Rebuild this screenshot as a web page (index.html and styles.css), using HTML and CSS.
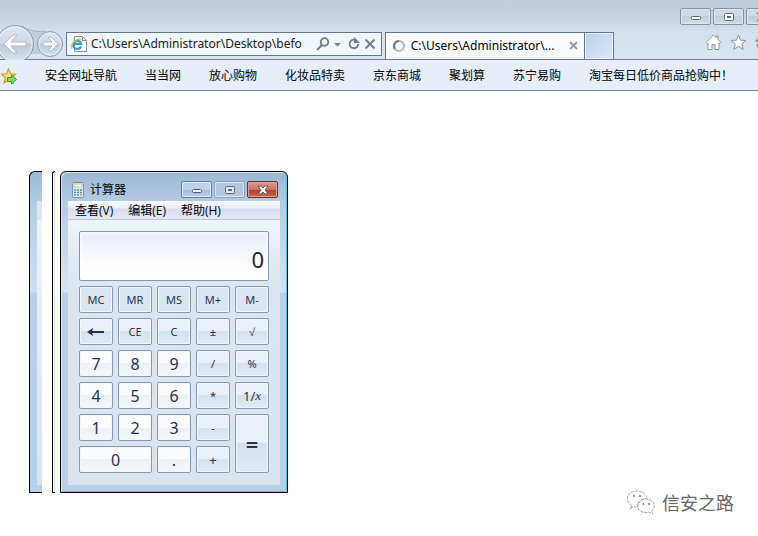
FILE: index.html
```html
<!DOCTYPE html>
<html lang="zh-CN">
<head>
<meta charset="utf-8">
<title>计算器</title>
<link rel="stylesheet" href="styles.css">
</head>
<body>
<header class="browser">
  <div class="caption">
    <button class="win-btn" aria-label="最小化"><svg width="12" height="10" viewBox="0 0 12 10"><rect x="1.5" y="4.500" width="9" height="3" rx="1" fill="#fff" stroke="#606974"/></svg></button>
    <button class="win-btn" aria-label="最大化"><svg width="12" height="10" viewBox="0 0 12 10"><rect x="1.500" y="1.500" width="9" height="7" rx="1" fill="#fff" stroke="#606974"/><rect x="4.500" y="4.500" width="3" height="1" fill="none" stroke="#606974"/></svg></button>
    <button class="win-btn win-btn-close" aria-label="关闭"><svg width="12" height="10" viewBox="0 0 12 10"><path d="M1 1h3l2 2 2-2h3L8 5l3 4H8L6 7 4 9H1l3-4z" fill="#fff" stroke="#606974"/></svg></button>
  </div>
  <div class="nav-row">
    <div class="history">
      <svg width="66" height="36" viewBox="0 0 66 36" aria-hidden="true">
        <defs>
          <linearGradient id="orb" x1="0" y1="0" x2="0" y2="1"><stop offset="0" stop-color="#dfe6ee"/><stop offset=".48" stop-color="#cfd8e2"/><stop offset=".5" stop-color="#bcc7d3"/><stop offset="1" stop-color="#dbe5ef"/></linearGradient>
        </defs>
        <path d="M22 2Q31 9 46 7L40 30H28z" fill="#c3ceda"/>
        <path d="M22 2Q31 9 46 7" fill="none" stroke="#a5b1be"/>
        <circle cx="15" cy="20" r="18.500" fill="url(#orb)" stroke="#8f9baa"/>
        <circle cx="15" cy="20" r="17" fill="none" stroke="#e9eff5"/>
        <path d="M4 20 13 11h4l-6 7h15v4H11l6 7h-4z" fill="#f8fafc" stroke="#a6b1bf" stroke-width=".8"/>
        <circle cx="50" cy="20" r="12.500" fill="url(#orb)" stroke="#8f9baa"/>
        <circle cx="50" cy="20" r="11" fill="none" stroke="#e9eff5"/>
        <path d="M58 20 51 13h-3l4 5h-9v4h9l-4 5h3z" fill="#f8fafc" stroke="#a6b1bf" stroke-width=".8"/>
      </svg>
    </div>
    <div class="address">
      <svg width="16" height="16" viewBox="0 0 16 16" aria-hidden="true"><path d="M3.500.5h8l4 4v11h-12z" fill="#fff" stroke="#8b8f94"/><path d="M11.500.5v4h4" fill="none" stroke="#8b8f94"/><path d="M10 10.500A4 4 0 1 1 10.200 8H3" fill="none" stroke="#2e9be0" stroke-width="2.200"/><path d="M.8 12.500C-.8 8 5 2.500 10.500 3" fill="none" stroke="#e3b52b" stroke-width="1.300"/></svg>
      <input class="url" type="text" aria-label="地址" value="C:\Users\Administrator\Desktop\befo">
      <button class="icon-btn" aria-label="搜索"><svg width="14" height="14" viewBox="0 0 14 14"><circle cx="8.500" cy="5" r="3.800" fill="none" stroke="#747c87" stroke-width="1.800"/><path d="M6 8 1 13" stroke="#747c87" stroke-width="2.200"/></svg></button>
      <button class="icon-btn" aria-label="展开"><svg width="8" height="14" viewBox="0 0 8 14"><path d="M0 6h7L3.500 9.500z" fill="#747c87"/></svg></button>
      <button class="icon-btn refresh" aria-label="刷新"><svg width="12" height="14" viewBox="0 0 12 14"><path d="M8 3.200A4.300 4.300 0 1 0 10.200 7" fill="none" stroke="#747c87" stroke-width="1.800"/><path d="M6 0v6h6z" fill="#747c87"/></svg></button>
      <button class="icon-btn" aria-label="停止"><svg width="12" height="14" viewBox="0 0 12 14"><path d="M1.500 2.500l9 9M10.500 2.500l-9 9" stroke="#747c87" stroke-width="2"/></svg></button>
    </div>
    <div class="tab">
      <svg width="14" height="14" viewBox="0 0 14 14" aria-hidden="true"><circle cx="7" cy="7" r="5" fill="none" stroke="#b4b6b9" stroke-width="2.200"/><path d="M7 2A5 5 0 0 0 3 10" fill="none" stroke="#777b80" stroke-width="2.200"/></svg>
      <span class="tab-title">C:\Users\Administrator\...</span>
      <button class="icon-btn" aria-label="关闭标签"><svg width="10" height="10" viewBox="0 0 10 10"><path d="M1 1l7 7M8 1 1 8" stroke="#9b9b9b" stroke-width="2"/></svg></button>
    </div>
    <button class="new-tab" aria-label="新建标签"></button>
    <div class="tools">
      <button class="icon-btn" aria-label="主页"><svg width="17" height="17" viewBox="0 0 17 17"><path d="M1 8.500 8.500 1l2.500 2.500V2h2v3.500l3 3-1 1-1-.5v6.500h-4v-5H7v5H3V9l-1 .5z" fill="#fff" stroke="#8d949c"/></svg></button>
      <button class="icon-btn" aria-label="收藏夹"><svg width="17" height="17" viewBox="0 0 17 17"><path d="M8.500 1l2 5.200 5.500.3-4.300 3.500 1.500 5.500-4.700-3.200-4.700 3.200L5.300 10 1 6.500l5.500-.3z" fill="#fff" stroke="#8d949c"/></svg></button>
      <button class="icon-btn" aria-label="工具"><svg width="17" height="17" viewBox="0 0 17 17"><circle cx="8.500" cy="8.500" r="6.500" fill="none" stroke="#8d949c" stroke-width="3" stroke-dasharray="2.600 2.500"/><circle cx="8.500" cy="8.500" r="4.500" fill="none" stroke="#8d949c" stroke-width="3"/><circle cx="8.500" cy="8.500" r="4.500" fill="none" stroke="#fff"/></svg></button>
    </div>
  </div>
  <nav class="favorites">
    <button class="icon-btn fav-add" aria-label="添加到收藏夹栏"><svg width="17" height="17" viewBox="0 0 17 17"><path d="M8.500 1l2 5 5 .3-4 3.500 1.500 5.200-4.500-3L4 15l1.500-5.200L1.500 6.300l5-.3z" fill="#fbe28a" stroke="#dc9b25" stroke-width="1.300"/><path d="M7.500 9.500h4v-2.500l5 4.500-5 4.500v-2.500h-4z" fill="#7ddb5c" stroke="#2f9a35"/></svg></button>
    <a href="#">安全网址导航</a>
    <a href="#">当当网</a>
    <a href="#">放心购物</a>
    <a href="#">化妆品特卖</a>
    <a href="#">京东商城</a>
    <a href="#">聚划算</a>
    <a href="#">苏宁易购</a>
    <a href="#">淘宝每日低价商品抢购中！</a>
  </nav>
</header>
<main class="page">
  <div class="windows">
    <div class="trail trail-wide"><div class="trail-body"></div></div>
    <div class="trail trail-thin"></div>
    <section class="calc" aria-label="计算器">
      <div class="calc-title">
        <svg width="12" height="16" viewBox="0 0 12 16" aria-hidden="true"><rect x=".5" y=".5" width="11" height="15" rx="1" fill="#d7eaf7" stroke="#6497bd"/><path d="M2 2h8v3H2z" fill="#fff" stroke="#e2bd67"/><path d="M2 8h2M5 8h2M8 8h2M2 10.500h2M5 10.500h2M8 10.500h2M2 13h2M5 13h2" stroke="#488ec0" stroke-width="1.500"/><path d="M8 13h2" stroke="#d8932d" stroke-width="1.500"/></svg>
        <h1>计算器</h1>
        <button class="win-btn" aria-label="最小化"><svg width="12" height="10" viewBox="0 0 12 10"><rect x="1.500" y="4.500" width="9" height="3" rx="1" fill="#fff" stroke="#4f5b69"/></svg></button>
        <button class="win-btn win-btn-off" aria-label="最大化" disabled><svg width="12" height="10" viewBox="0 0 12 10"><rect x="1.500" y="1.500" width="9" height="7" rx="1" fill="#dce7f2" stroke="#5c6979"/><rect x="4.500" y="4.500" width="3" height="1" fill="none" stroke="#5c6979"/></svg></button>
        <button class="win-btn win-btn-red" aria-label="关闭"><svg width="12" height="10" viewBox="0 0 12 10"><path d="M1 1h3l2 2 2-2h3L8 5l3 4H8L6 7 4 9H1l3-4z" fill="#fff" stroke="#534044" stroke-width=".8"/></svg></button>
      </div>
      <div class="calc-body">
        <div class="menu">
          <button>查看(V)</button>
          <button>编辑(E)</button>
          <button>帮助(H)</button>
        </div>
        <div class="face">
          <output class="display">0</output>
          <div class="keys">
            <button class="key flat">MC</button><button class="key flat">MR</button><button class="key flat">MS</button><button class="key flat">M+</button><button class="key flat">M-</button>
            <button class="key" aria-label="退格"><svg width="18" height="8" viewBox="0 0 18 8"><path d="M3 4h14" stroke="#22304f" stroke-width="2"/><path d="M0 4 6 0 5 4l1 4z" fill="#22304f"/></svg></button><button class="key">CE</button><button class="key">C</button><button class="key">±</button><button class="key">√</button>
            <button class="key num">7</button><button class="key num">8</button><button class="key num">9</button><button class="key">/</button><button class="key">%</button>
            <button class="key num">4</button><button class="key num">5</button><button class="key num">6</button><button class="key">*</button><button class="key recip">1/<i>x</i></button>
            <button class="key num">1</button><button class="key num">2</button><button class="key num">3</button><button class="key">-</button><button class="key equals">=</button>
            <button class="key num zero">0</button><button class="key num">.</button><button class="key plus">+</button>
          </div>
        </div>
      </div>
    </section>
  </div>
  <div class="signature">
    <svg width="30" height="26" viewBox="0 0 30 26" aria-hidden="true"><g fill="#fff" stroke="#a2a2a2" stroke-dasharray="3 1"><path d="M6 16.500C-2 12 1 2 11 2c6 0 10 4 10 8-6-1-11 4-9 8-2 0-3 0-4-.5L4 20z"/><path d="M25.500 22.500C31 18 28 10 20 10s-11 9-5 12.500c3 1.500 6 1 8 0.500l4 2z"/></g><g fill="#777"><circle cx="8" cy="7" r="1"/><circle cx="14" cy="7" r="1"/><circle cx="17.500" cy="15" r="1"/><circle cx="23" cy="15" r="1"/></g></svg>
    <span>信安之路</span>
  </div>
</main>
</body>
</html>
```
FILE: styles.css
```css
* { box-sizing: border-box; }

body {
  margin: 0;
  background: #fff;
  color: #000;
  font: 12px/16px "Open Sans", "Noto Sans CJK SC", sans-serif;
  overflow-x: hidden;
}

button { font: inherit; color: inherit; margin: 0; padding: 0; }
svg { display: block; flex: none; }

.icon-btn { border: 0; background: none; flex: none; }

/* Browser chrome */
.browser {
  overflow: hidden;
  background: linear-gradient(#c0cddb 0, #c4d0dd 12px, #d4e0ec 32px, #dae5f1 58px);
}

.caption {
  display: flex;
  justify-content: flex-end;
  gap: 2px;
  padding-top: 8px;
  margin-right: -36px;
}

.win-btn {
  display: flex;
  align-items: center;
  justify-content: center;
  flex: none;
  width: 31px;
  height: 17px;
  border: 1px solid #8492a3;
  border-radius: 2px;
  background: linear-gradient(#d0dae6 50%, #c1cddb 50%, #d0dce8);
  box-shadow: inset 0 0 0 1px #dde6f0;
}
.win-btn-close { width: 48px; justify-content: flex-start; padding-left: 9px; }

.nav-row {
  display: flex;
  align-items: flex-end;
  height: 35px;
  border-bottom: 1px solid #6f7f93;
}
.history { width: 66px; flex: none; height: 35px; }

.address {
  display: flex;
  align-items: center;
  flex: 304 1 0;
  min-width: 0;
  height: 24px;
  margin: 0 3px 3px 0;
  padding: 0 5px 0 4px;
  border: 1px solid #64758c;
  background: #f1f6fb;
}
.url {
  flex: 1;
  min-width: 0;
  margin: 0 0 0 4px;
  padding: 0;
  border: 0;
  background: none;
  color: #222;
  font: 12px/16px "Noto Sans", sans-serif;
}
.address .icon-btn { margin-left: 4px; }
.address .refresh { margin-left: 6px; }

.tab {
  display: flex;
  align-items: center;
  flex: 187 1 0;
  min-width: 0;
  height: 27px;
  padding: 0 5px 0 6px;
  border: 1px solid #64758c;
  border-bottom: 0;
  background: linear-gradient(#fff, #f4f8fd);
}
.tab-title {
  flex: 1;
  margin-left: 5px;
  white-space: nowrap;
  overflow: hidden;
  font-family: "Noto Sans", sans-serif;
}

.new-tab {
  width: 29px;
  height: 27px;
  flex: none;
  border: 1px solid #64758c;
  border-left: 0;
  border-bottom: 0;
  background: linear-gradient(135deg, #b9d2ee, #dce8f6);
  box-shadow: inset 0 0 0 1px #e9f1fa;
}

.tools {
  display: flex;
  gap: 8px;
  align-self: center;
  flex: none;
  margin: 0 -14px 0 91px;
}

.favorites {
  display: flex;
  align-items: center;
  gap: 28px;
  height: 31px;
  padding-top: 2px;
  border-bottom: 1px solid #7b8591;
  background: #e7eef9;
  white-space: nowrap;
}
.favorites a { color: #000; text-decoration: none; }

/* Page */
.page {
  display: flex;
  justify-content: space-between;
  align-items: flex-end;
  padding: 80px 24px 20px 29px;
}
.windows { display: flex; margin-bottom: 22px; }

.trail {
  border: 1px solid #000;
  border-right: 0;
  border-top-left-radius: 6px;
}
.trail-wide {
  display: flex;
  width: 13px;
  margin-right: 10px;
  padding: 29px 0 7px 7px;
  background: linear-gradient(#9bb9d6, #b5cbe2 30px, #cfdff0 120px, #b8cfe8 121px);
}
.trail-body {
  flex: 1;
  background: linear-gradient(#e2e4f2 18px, #c9cde0 18px, #edf3fb 19px, #dae4f0);
}
.trail-thin {
  width: 3px;
  margin-right: 5px;
  border-top-left-radius: 3px;
  background: linear-gradient(90deg, #fff 1px, #d3dde5 1px);
}

.calc {
  width: 228px;
  padding: 0 7px 7px;
  border: 1px solid #000;
  border-radius: 6px 6px 0 0;
  background: linear-gradient(#9bb7d5, #b5cbe3 30px, #d6e4f4 120px, #b8cfe8 121px);
  box-shadow: inset 1px 1px #dce9f5, inset -1px -1px #4fc6df;
}
.calc-title {
  display: flex;
  align-items: center;
  gap: 2px;
  height: 29px;
  padding: 6px 2px 0 4px;
}
.calc-title h1 {
  flex: 1;
  margin: 0 0 0 4px;
  font-size: 12px;
  font-weight: 400;
}
.calc-title .win-btn { border-color: #6580a0; background: linear-gradient(#bfd2e8 50%, #9eb9d8 50%, #b6d1ea); }
.calc-title .win-btn-off { border-color: #8aa3c0; background: #b3c8df; }
.calc-title .win-btn-red {
  border-color: #702d30;
  background: linear-gradient(#dda093, #ca7162 50%, #b33b27 50%, #d3684e);
  box-shadow: inset 0 0 0 1px #dfa094;
}

.menu {
  display: flex;
  gap: 15px;
  height: 19px;
  padding-left: 7px;
  border-bottom: 1px solid #bfc4d8;
  background: linear-gradient(#fafbfe, #e9ecf7 7px, #d8dced 8px, #e5e8f5);
}
.menu button { border: 0; background: none; line-height: 20px; }

.face {
  padding: 11px 11px 12px;
  background: linear-gradient(#edf4fc, #dae5f1 70px, #dae4f0);
}
.display {
  display: flex;
  align-items: flex-end;
  justify-content: flex-end;
  height: 50px;
  margin-bottom: 5px;
  padding: 0 4px 6px;
  border: 1px solid #8798ad;
  border-radius: 2px;
  background: linear-gradient(#e4edfa, #fff 36px);
  box-shadow: inset 0 0 4px 1px #fff;
  color: #1d2633;
  font: 22px/30px "Noto Sans", sans-serif;
}

.keys {
  display: grid;
  grid-template-columns: repeat(5, 1fr);
  grid-auto-rows: 27px;
  gap: 5px;
}
.key {
  display: flex;
  align-items: center;
  justify-content: center;
  border: 1px solid #8798ad;
  border-radius: 2px;
  background: linear-gradient(#e9f0f8 50%, #d6e1ed 50%, #e0e9f3);
  box-shadow: inset 0 0 0 1px #f1f6fb;
  color: #26334f;
  font: 11px/16px "Noto Sans", sans-serif;
}
.flat { background: #dae5f1; }
.num {
  background: linear-gradient(#fbfcfe 50%, #edf1f6 50%, #f5f8fb);
  font-size: 16px;
}
.zero { grid-column: span 2; }
.equals { grid-area: 5 / 5 / 7 / 6; font-size: 22px; font-weight: 600; }
.plus { font-size: 13px; }
.recip { font-size: 13px; }
.recip i { font-family: "Liberation Serif", serif; }

.signature {
  display: flex;
  align-items: center;
  gap: 6px;
  color: #686868;
  font: 18px/26px "Noto Sans CJK SC", sans-serif;
}
```
